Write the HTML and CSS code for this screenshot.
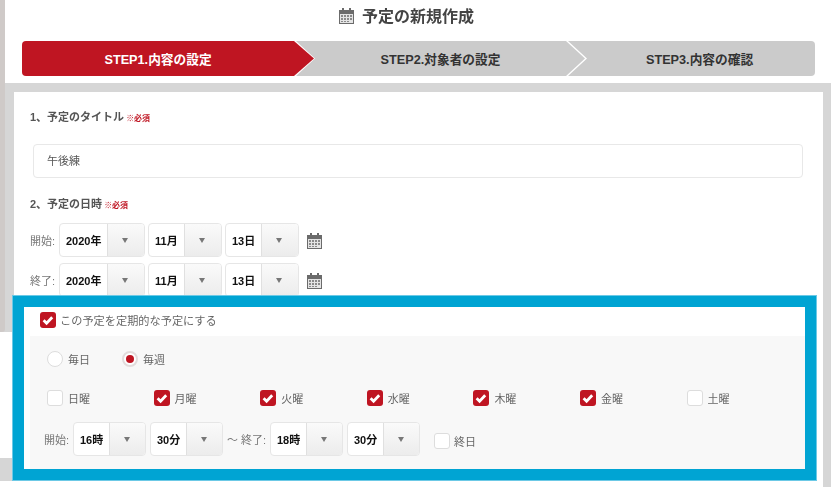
FILE: index.html
```html
<!DOCTYPE html>
<html lang="ja">
<head>
    <meta charset="UTF-8">
    <meta name="viewport" content="width=device-width, initial-scale=1.0">
    <title>予定の新規作成</title>
    <link rel="stylesheet" href="styles.css">
</head>
<body>
    <svg class="svg-defs" width="0" height="0">
        <symbol id="cal" viewBox="0 0 17 17">
            <path fill="#6b6b6b" d="M1 3h3V1h2v2h5V1h2v2h3v14H1z"/>
            <path fill="#e4e4e4" d="M2 7h13v9H2z"/>
            <path fill="#8a8a8a" d="M3 8h2v2H3zM6 8h2v2H6zM9 8h2v2H9zM12 8h2v2h-2zM3 11h2v2H3zM6 11h2v2H6zM9 11h2v2H9zM12 11h2v2h-2zM6 14h2v1H6zM9 14h2v1H9zM3 14h2v1H3z"/>
        </symbol>
        <symbol id="tick" viewBox="0 0 16 16">
            <rect width="16" height="16" rx="3" fill="#bf1522"/>
            <path fill="none" stroke="#fff" stroke-width="2.8" d="M3.6 8.2l3 3 5.6-6"/>
        </symbol>
    </svg>

    <div class="page">
        <div class="edge"></div>
        <div class="edge-patch"></div>
        <div class="edge-foot"></div>

        <!-- Header -->
        <header class="head">
            <h1 class="title">
                <svg class="title-icon"><use href="#cal"/></svg>
                予定の新規作成
            </h1>
            <div class="steps">
                <div class="step step-1">STEP1.内容の設定</div>
                <div class="step step-2">STEP2.対象者の設定</div>
                <div class="step step-3">STEP3.内容の確認</div>
            </div>
        </header>

        <!-- Form -->
        <main class="panel">
            <p class="label label-first">1、予定のタイトル<span class="req">※必須</span></p>
            <div class="text-input">午後練</div>

            <p class="label label-date">2、予定の日時<span class="req">※必須</span></p>
            <div class="date-row">
                <span class="cap">開始:</span>
                <div class="sel sel-year"><b>2020年</b><i></i></div>
                <div class="sel sel-short"><b>11月</b><i></i></div>
                <div class="sel sel-short"><b>13日</b><i></i></div>
                <svg class="cal-icon"><use href="#cal"/></svg>
            </div>
            <div class="date-row">
                <span class="cap">終了:</span>
                <div class="sel sel-year"><b>2020年</b><i></i></div>
                <div class="sel sel-short"><b>11月</b><i></i></div>
                <div class="sel sel-short"><b>13日</b><i></i></div>
                <svg class="cal-icon"><use href="#cal"/></svg>
            </div>
        </main>

        <!-- Highlighted repeat settings -->
        <section class="repeat">
            <label class="repeat-top">
                <svg class="check"><use href="#tick"/></svg>
                この予定を定期的な予定にする
            </label>
            <div class="repeat-body">
                <div class="radios">
                    <span class="opt opt-daily"><span class="radio"></span>毎日</span>
                    <span class="opt"><span class="radio radio-on"></span>毎週</span>
                </div>
                <div class="days">
                    <span class="opt"><span class="box"></span>日曜</span>
                    <span class="opt"><svg class="check"><use href="#tick"/></svg>月曜</span>
                    <span class="opt"><svg class="check"><use href="#tick"/></svg>火曜</span>
                    <span class="opt"><svg class="check"><use href="#tick"/></svg>水曜</span>
                    <span class="opt"><svg class="check"><use href="#tick"/></svg>木曜</span>
                    <span class="opt"><svg class="check"><use href="#tick"/></svg>金曜</span>
                    <span class="opt"><span class="box"></span>土曜</span>
                </div>
                <div class="times">
                    <span class="cap">開始:</span>
                    <div class="sel sel-time"><b>16時</b><i></i></div>
                    <div class="sel sel-time"><b>30分</b><i></i></div>
                    <span class="cap cap-end">～ 終了:</span>
                    <div class="sel sel-time"><b>18時</b><i></i></div>
                    <div class="sel sel-time"><b>30分</b><i></i></div>
                    <span class="opt opt-allday"><span class="box"></span>終日</span>
                </div>
            </div>
        </section>
    </div>
</body>
</html>
```

FILE: styles.css
```css
* {
    box-sizing: border-box;
}
html, body {
    height: 100%;
}
body {
    margin: 0;
    overflow: hidden;
    background: #d6d6d6;
    color: #555;
    font-family: "Liberation Sans", "Noto Sans CJK JP", sans-serif;
    font-size: 11px;
}
.svg-defs {
    position: absolute;
}
.page {
    position: relative;
    height: 487px;
    padding-left: 5px;
    filter: blur(0.4px);
}

/* bits of the window behind, showing at the left edge */
.edge {
    position: absolute;
    left: 0;
    top: 0;
    width: 5px;
    height: 332px;
    background: #cfcac8;
    border-radius: 0 0 3px 0;
}
.edge-patch {
    position: absolute;
    left: 0;
    top: 332px;
    width: 12px;
    height: 126px;
    background: #fff;
}
.edge-foot {
    position: absolute;
    left: 0;
    top: 481px;
    width: 14px;
    height: 6px;
    background: #fff;
}

/* header */
.head {
    height: 83px;
    background: #fff;
    padding-top: 5px;
}
.title {
    display: flex;
    align-items: center;
    justify-content: center;
    gap: 7px;
    height: 20px;
    margin: 0 0 16px 0;
    padding-right: 24px;
    color: #444;
    font-size: 16px;
    font-weight: bold;
}
.title-icon {
    width: 17px;
    height: 17px;
}
.steps {
    display: flex;
    height: 35px;
    margin-left: 17px;
}
.step {
    display: flex;
    align-items: center;
    justify-content: center;
    background: #cbcbcb;
    color: #333;
    font-size: 12.7px;
    font-weight: bold;
}
.step-1 {
    width: 292px;
    padding-right: 20px;
    background: #bf1522;
    color: #fff;
    border-radius: 4px 0 0 4px;
    clip-path: polygon(0 0, 272px 0, 100% 50%, 272px 100%, 0 100%);
}
.step-2 {
    width: 289px;
    margin-left: -18px;
    clip-path: polygon(0 0, 270px 0, 100% 50%, 270px 100%, 0 100%, 19px 50%);
}
.step-3 {
    width: 247px;
    margin-left: -17px;
    padding-left: 16px;
    border-radius: 0 4px 4px 0;
    clip-path: polygon(0 0, 100% 0, 100% 100%, 0 100%, 19px 50%);
}

/* form */
.panel {
    height: 398px;
    margin: 9px 8px 0 9px;
    padding: 0 16px;
    background: #fff;
}
.label {
    margin: 0;
    height: 14px;
    line-height: 14px;
    color: #555;
    font-weight: bold;
    font-size: 11px;
}
.label-first {
    position: relative;
    top: 18px;
}
.label-date {
    margin-top: 19px;
}
.req {
    margin-left: 2px;
    color: #bf1522;
    font-size: 8px;
}
.text-input {
    height: 34px;
    margin: 38px 4px 0 3px;
    padding: 0 0 2px 13px;
    display: flex;
    align-items: center;
    border: 1px solid #e8e8e8;
    border-radius: 4px;
    font-size: 11px;
}
.date-row {
    display: flex;
    align-items: center;
    height: 34px;
    margin-top: 6px;
}
.label-date + .date-row {
    margin-top: 12px;
}
.cap {
    width: 25px;
    flex: none;
    color: #777;
    font-size: 11px;
    white-space: nowrap;
}
.sel {
    display: flex;
    height: 34px;
    border: 1px solid #e6e6e6;
    border-radius: 4px;
    overflow: hidden;
    background: #fff;
}
.sel b {
    flex: 1;
    display: flex;
    align-items: center;
    padding-left: 6px;
    color: #111;
    font-size: 11px;
}
.sel i {
    position: relative;
    width: 37px;
    border-left: 1px solid #e0e0e0;
    background: linear-gradient(#fafafa, #ececec);
}
.sel i::after {
    content: "";
    position: absolute;
    top: 14px;
    left: 14px;
    border: 3.5px solid transparent;
    border-top: 5px solid #777;
    border-bottom: 0;
}
.sel-year {
    width: 86px;
    margin-left: 4px;
}
.sel-short {
    width: 74px;
    margin-left: 3px;
}
.cal-icon {
    width: 17px;
    height: 17px;
    margin-left: 7px;
}

/* blue highlight */
.repeat {
    position: absolute;
    left: 12px;
    top: 295px;
    width: 805px;
    height: 186px;
    padding-left: 6px;
    background: #fff;
    border: 12px solid #00a4d3;
    outline: 1px solid #6cc9e6;
    outline-offset: -1px;
    font-size: 11px;
}
.repeat-top {
    display: flex;
    align-items: center;
    gap: 4px;
    height: 29px;
    padding: 0 0 3px 10px;
    color: #666;
    font-size: 11.2px;
}
.check {
    flex: none;
    width: 16px;
    height: 16px;
}
.repeat-body {
    height: 133px;
    padding: 15px 0 0 17px;
    background: #f8f8f8;
}
.radios {
    display: flex;
    height: 16px;
}
.opt {
    display: flex;
    align-items: center;
    gap: 5px;
    color: #666;
}
.opt-daily {
    width: 75px;
}
.radio, .box {
    flex: none;
    width: 16px;
    height: 16px;
    background: #fff;
    border: 1px solid #ddd;
}
.radio {
    position: relative;
    border-radius: 50%;
}
.box {
    border-radius: 3px;
}
.radio-on {
    border: 2px solid #e2dcdc;
}
.radio-on::after {
    content: "";
    position: absolute;
    left: 2px;
    top: 2px;
    width: 8px;
    height: 8px;
    border-radius: 50%;
    background: #bf1522;
}
.days {
    display: grid;
    grid-template-columns: repeat(7, 106.6px);
    height: 16px;
    margin-top: 23px;
}
.times {
    display: flex;
    align-items: center;
    height: 34px;
    margin: 16px 0 0 -3px;
}
.sel-time {
    width: 73px;
    margin-left: 4px;
}
.sel-time i {
    width: 36px;
}
.cap-end {
    width: 39px;
    margin-left: 4px;
}
.opt-allday {
    margin-left: 14px;
    padding-top: 3px;
    gap: 4px;
}
```
